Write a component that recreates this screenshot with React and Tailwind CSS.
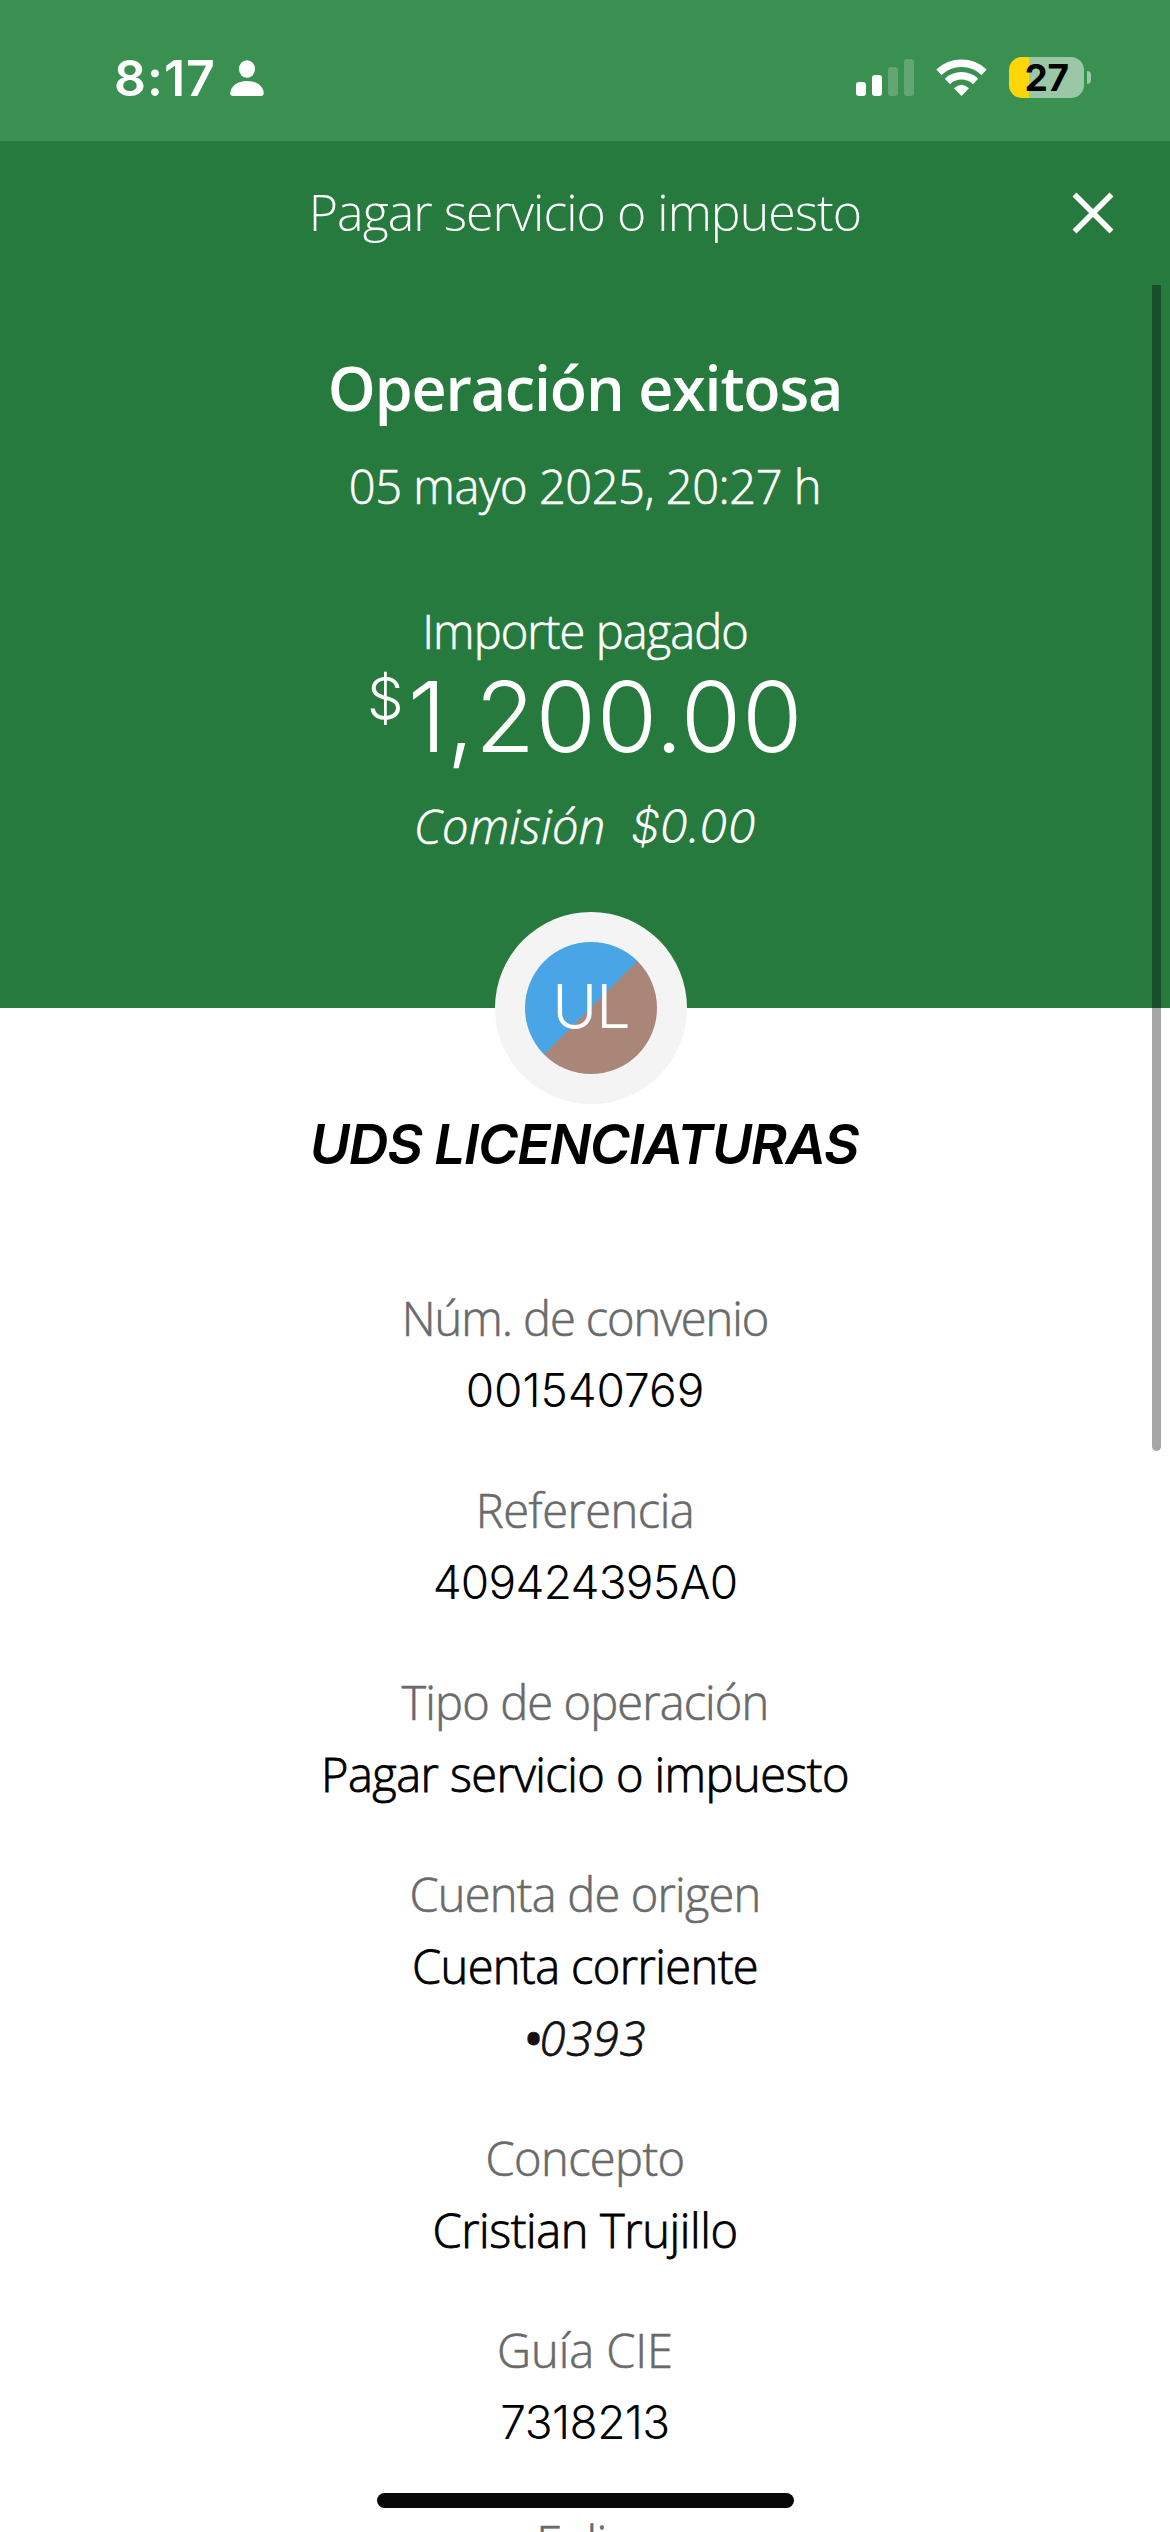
const label = "text-[#6a6a6a] [-webkit-text-stroke:0.6px_#6a6a6a]";
const value = "text-black [-webkit-text-stroke:0.8px_#000]";
const numeric = "text-black font-['Inter',sans-serif] text-[46px]";

const fields = [
  {
    label: "Núm. de convenio",
    tracking: "tracking-[-1.07px]",
    values: [{ text: "001540769", className: `${numeric} tracking-[-0.04px]` }],
  },
  {
    label: "Referencia",
    tracking: "tracking-[-0.5px]",
    values: [{ text: "409424395A0", className: `${numeric} tracking-[-0.72px]` }],
  },
  {
    label: "Tipo de operación",
    tracking: "tracking-[-0.88px]",
    values: [{ text: "Pagar servicio o impuesto", className: `${value} tracking-[-0.55px]` }],
  },
  {
    label: "Cuenta de origen",
    tracking: "tracking-[-0.8px]",
    values: [
      { text: "Cuenta corriente", className: `${value} tracking-[-0.58px]` },
      { masked: true, text: "0393", className: "italic text-[#121212] tracking-[0.8px] [-webkit-text-stroke:0.8px_#121212]" },
    ],
  },
  {
    label: "Concepto",
    tracking: "tracking-[-0.62px]",
    values: [{ text: "Cristian Trujillo", className: `${value} tracking-[-0.4px]` }],
  },
  {
    label: "Guía CIE",
    tracking: "tracking-[-0.07px]",
    values: [{ text: "7318213", className: `${numeric} tracking-[-0.57px]` }],
  },
  { label: "Folio", tracking: "tracking-[-0.5px]", values: [] },
];

const StatusBar = () => (
  <div className="flex h-[141px] items-start justify-between bg-[#3a9050] pl-[114px] pr-[79px] text-white">
    <div className="flex pt-[48px]">
      <span className="w-[116px] font-['Inter',sans-serif] text-[50px] font-semibold leading-[60px] tracking-[1px]">8:17</span>
      <svg className="mt-[12px] h-[36px] w-[34px]" viewBox="0 0 34 36" fill="currentColor">
        <ellipse cx="17" cy="9" rx="8" ry="8.8" />
        <path d="M3 36C1.200 36 .300 35 .300 33.200C.300 26.500 7.500 21 17 21C26.500 21 33.700 26.500 33.700 33.200C33.700 35 32.800 36 31 36Z" />
      </svg>
    </div>

    <div className="flex pt-[57px]">
      {/* Signal */}
      <div className="mt-[2px] mr-[22px] flex h-[37px] items-end gap-[6px]">
        <div className="h-[14px] w-[10px] rounded-[3px] bg-white" />
        <div className="h-[21px] w-[10px] rounded-[3px] bg-white" />
        <div className="h-[29px] w-[10px] rounded-[3px] bg-white/20" />
        <div className="h-[37px] w-[10px] rounded-[3px] bg-white/20" />
      </div>
      {/* Wifi */}
      <svg className="mt-[2px] mr-[22px] h-[38px] w-[51px]" viewBox="0 0 51 38" fill="none" stroke="currentColor" strokeWidth="7.5">
        <path d="M2.900 13.200A33.200 33.200 0 0 1 48.100 13.200" />
        <path d="M11.400 22.400A20.700 20.700 0 0 1 39.600 22.400" />
        <path d="M25.500 37L18 29.300Q25.500 22 33 29.300Z" fill="currentColor" stroke="none" />
      </svg>
      {/* Battery */}
      <div className="flex h-[41px] w-[75px] items-center justify-center rounded-[13px] bg-[linear-gradient(90deg,#ffd60a_20px,#9cc7a7_20px)]">
        <span className="font-['Inter',sans-serif] text-[37px] font-bold leading-[41px] tracking-[-0.5px] text-black">27</span>
      </div>
      <div className="mt-[14px] ml-[3px] h-[13px] w-[4px] rounded-r-full bg-[#9cc7a7]" />
    </div>
  </div>
);

const Receipt = () => (
  <div className="h-[867px] bg-[#277a3e] text-center text-white">
    <div className="flex h-[141px]">
      <div className="w-[100px]" />
      <h2 className="flex-1 text-[50px] leading-[142px] tracking-[-0.96px]">Pagar servicio o impuesto</h2>
      <button className="flex w-[100px] pt-[51px] pl-[2px]">
        <svg className="h-[42px] w-[42px]" viewBox="0 0 42 42" stroke="currentColor" strokeWidth="5.500">
          <path d="M2.500 2.500L39.500 39.500M39.500 2.500L2.500 39.500" />
        </svg>
      </button>
    </div>
    <h1 className="mt-[66px] text-[61px] font-semibold leading-[80px] tracking-[-1.17px]">Operación exitosa</h1>
    <p className="mt-[22px] text-[47px] leading-[72px] tracking-[-0.45px] [-webkit-text-stroke:0.6px_#fff]">05 mayo 2025, 20:27 h</p>
    <p className="mt-[73px] text-[47px] leading-[72px] tracking-[-0.93px] [-webkit-text-stroke:0.6px_#fff]">Importe pagado</p>
    <div className="flex justify-center font-['Inter',sans-serif]">
      <span className="text-[58px] leading-[62px]">$</span>
      <span className="ml-[4px] text-[98px] leading-[100px] tracking-[0.5px]">1,200.00</span>
    </div>
    <p className="mt-[22px] flex justify-center gap-[25px] text-[47px] italic leading-[74px]">
      <span className="tracking-[0.39px] [-webkit-text-stroke:0.6px_#fff]">Comisión</span>
      <span className="font-['Inter',sans-serif] text-[46px] tracking-[0.15px]">$0.00</span>
    </p>
  </div>
);

const Avatar = () => (
  <div className="relative -mt-[96px] ml-[12px] flex size-[192px] items-center justify-center rounded-full bg-[#f4f4f4]">
    <div className="flex size-[132px] items-center justify-center rounded-full bg-[linear-gradient(135deg,#49a5e6_50%,#a98677_50%)]">
      <span className="pb-[3px] font-['Inter',sans-serif] text-[61px] font-light leading-none tracking-[-1px] text-white">UL</span>
    </div>
  </div>
);

export default function App() {
  return (
    <div className="relative h-[2532px] w-[1170px] overflow-hidden bg-white font-['Open_Sans',sans-serif] font-light">
      <StatusBar />
      <Receipt />

      <div className="flex flex-col items-center">
        <Avatar />
        <h3 className="mt-[4px] mr-[2px] font-['Inter',sans-serif] text-[55px] font-semibold italic leading-[72px] tracking-[-1.3px] text-black">
          UDS LICENCIATURAS
        </h3>

        <div className="mt-[101px] flex flex-col gap-[48px] text-center text-[47px] leading-[74px]">
          {fields.map((field) => (
            <div key={field.label}>
              <p className={`h-[72px] ${label} ${field.tracking}`}>{field.label}</p>
              {field.values.map((item) => (
                <p key={item.text} className={`h-[72px] ${item.className}`}>
                  {item.masked && <span className="font-semibold tracking-[-2px]">•</span>}
                  {item.text}
                </p>
              ))}
            </div>
          ))}
        </div>
      </div>

      {/* Scroll indicator */}
      <div className="absolute top-[285px] right-[9px] h-[1166px] w-[9px] rounded-b-full bg-black/35" />

      {/* Home indicator */}
      <div className="absolute top-[2493px] left-[377px] h-[15px] w-[417px] rounded-full bg-[#080808]" />
    </div>
  );
}
